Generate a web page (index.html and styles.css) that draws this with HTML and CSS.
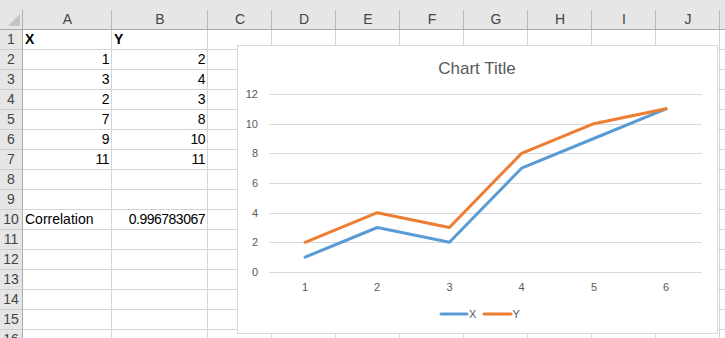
FILE: index.html
```html
<!DOCTYPE html>
<html>

<head>
    <meta content="text/html; charset=utf-8" http-equiv="Content-Type">
    <title>Correlation</title>
    <link rel="stylesheet" href="styles.css">
</head>

<body>
<div class="sheet">
    <div class="row head">
        <div class="corner"><span class="cornerTri"></span></div>
        <div>A</div><div>B</div><div>C</div><div>D</div><div>E</div><div>F</div>
        <div>G</div><div>H</div><div>I</div><div>J</div><div></div>
    </div>
    <div class="row">
        <div class="rh">1</div><div class="bold">X</div><div class="bold">Y</div>
        <div></div><div></div><div></div><div></div><div></div><div></div><div></div><div></div><div></div>
    </div>
    <div class="row">
        <div class="rh">2</div><div class="num">1</div><div class="num">2</div>
        <div></div><div></div><div></div><div></div><div></div><div></div><div></div><div></div><div></div>
    </div>
    <div class="row">
        <div class="rh">3</div><div class="num">3</div><div class="num">4</div>
        <div></div><div></div><div></div><div></div><div></div><div></div><div></div><div></div><div></div>
    </div>
    <div class="row">
        <div class="rh">4</div><div class="num">2</div><div class="num">3</div>
        <div></div><div></div><div></div><div></div><div></div><div></div><div></div><div></div><div></div>
    </div>
    <div class="row">
        <div class="rh">5</div><div class="num">7</div><div class="num">8</div>
        <div></div><div></div><div></div><div></div><div></div><div></div><div></div><div></div><div></div>
    </div>
    <div class="row">
        <div class="rh">6</div><div class="num">9</div><div class="num">10</div>
        <div></div><div></div><div></div><div></div><div></div><div></div><div></div><div></div><div></div>
    </div>
    <div class="row">
        <div class="rh">7</div><div class="num">11</div><div class="num">11</div>
        <div></div><div></div><div></div><div></div><div></div><div></div><div></div><div></div><div></div>
    </div>
    <div class="row">
        <div class="rh">8</div><div></div><div></div>
        <div></div><div></div><div></div><div></div><div></div><div></div><div></div><div></div><div></div>
    </div>
    <div class="row">
        <div class="rh">9</div><div></div><div></div>
        <div></div><div></div><div></div><div></div><div></div><div></div><div></div><div></div><div></div>
    </div>
    <div class="row">
        <div class="rh">10</div><div>Correlation</div><div class="num">0.996783067</div>
        <div></div><div></div><div></div><div></div><div></div><div></div><div></div><div></div><div></div>
    </div>
    <div class="row">
        <div class="rh">11</div><div></div><div></div>
        <div></div><div></div><div></div><div></div><div></div><div></div><div></div><div></div><div></div>
    </div>
    <div class="row">
        <div class="rh">12</div><div></div><div></div>
        <div></div><div></div><div></div><div></div><div></div><div></div><div></div><div></div><div></div>
    </div>
    <div class="row">
        <div class="rh">13</div><div></div><div></div>
        <div></div><div></div><div></div><div></div><div></div><div></div><div></div><div></div><div></div>
    </div>
    <div class="row">
        <div class="rh">14</div><div></div><div></div>
        <div></div><div></div><div></div><div></div><div></div><div></div><div></div><div></div><div></div>
    </div>
    <div class="row">
        <div class="rh">15</div><div></div><div></div>
        <div></div><div></div><div></div><div></div><div></div><div></div><div></div><div></div><div></div>
    </div>
    <div class="row">
        <div class="rh">16</div><div></div><div></div>
        <div></div><div></div><div></div><div></div><div></div><div></div><div></div><div></div><div></div>
    </div>

    <!-- chart floats over the cells -->
    <div class="chart">
        <svg class="plot" width="479" height="287" viewBox="238 46 479 287">
            <text class="chartTitle" x="477" y="74" text-anchor="middle">Chart Title</text>

            <g class="grid">
                <line x1="269" x2="702" y1="94.5" y2="94.5"/>
                <line x1="269" x2="702" y1="124.5" y2="124.5"/>
                <line x1="269" x2="702" y1="153.5" y2="153.5"/>
                <line x1="269" x2="702" y1="183.5" y2="183.5"/>
                <line x1="269" x2="702" y1="213.5" y2="213.5"/>
                <line x1="269" x2="702" y1="242.5" y2="242.5"/>
                <line x1="269" x2="702" y1="272.5" y2="272.5"/>
            </g>

            <g class="axis" text-anchor="end">
                <text x="258" y="98">12</text>
                <text x="258" y="128">10</text>
                <text x="258" y="157">8</text>
                <text x="258" y="187">6</text>
                <text x="258" y="217">4</text>
                <text x="258" y="246">2</text>
                <text x="258" y="276">0</text>
            </g>
            <g class="axis" text-anchor="middle">
                <text x="305" y="291">1</text>
                <text x="377" y="291">2</text>
                <text x="449.5" y="291">3</text>
                <text x="521.5" y="291">4</text>
                <text x="594" y="291">5</text>
                <text x="666" y="291">6</text>
            </g>

            <polyline class="serX" points="305.1,257.2 377.3,227.5 449.4,242.3 521.6,168.2 593.8,138.5 666,108.8"/>
            <polyline class="serY" points="305.1,242.3 377.3,212.7 449.4,227.5 521.6,153.3 593.8,123.7 666,108.8"/>

            <line class="serX" x1="441" x2="467" y1="314" y2="314"/>
            <text class="axis" x="469" y="318">X</text>
            <line class="serY" x1="484" x2="511" y1="314" y2="314"/>
            <text class="axis" x="512.5" y="318">Y</text>
        </svg>
    </div>
</div>
</body>

</html>
```

FILE: styles.css
```css
* {
    box-sizing: border-box;
}

body {
    margin: 0;
    overflow: hidden;
    background: #ffffff;
    font-family: "Liberation Sans", Arial, sans-serif;
    font-size: 14px;
    color: #000000;
}

.sheet {
    position: relative;
    width: 725px;
    height: 338px;
    overflow: hidden;
}

.row {
    display: grid;
    grid-template-columns: 23px 89px 96px repeat(9, 64px);
    height: 20px;
}

.row > div {
    border-right: 1px solid #d4d4d4;
    border-bottom: 1px solid #d4d4d4;
    padding: 0 2px;
    line-height: 19px;
    white-space: nowrap;
    overflow: hidden;
}

.row > .rh {
    background: #e6e6e6;
    border-right-color: #ababab;
    border-bottom-color: #cdcdcd;
    color: #444444;
    text-align: center;
    padding: 0;
}

.head {
    height: 30px;
}

.head > div {
    border-right: none;
    border-bottom: 1px solid #ababab;
    background: linear-gradient(#b9b9b9, #b9b9b9) right bottom / 1px 19px no-repeat, #e6e6e6;
    padding-top: 10px;
    color: #444444;
    text-align: center;
}

.head > .corner {
    display: flex;
    justify-content: flex-end;
    align-items: flex-end;
    padding: 0 3px 3px 0;
    background: linear-gradient(#ababab, #ababab) right bottom / 1px 19px no-repeat, #e6e6e6;
}

.cornerTri {
    display: block;
    width: 12px;
    height: 12px;
    background: #c4c4c4;
    clip-path: polygon(100% 0, 100% 100%, 0 100%);
}

.num {
    text-align: right;
    letter-spacing: -0.5px;
}

.bold {
    font-weight: bold;
}

.chart {
    position: absolute;
    left: 237px;
    top: 45px;
    width: 481px;
    height: 289px;
    background: #ffffff;
    border: 1px solid #d9d9d9;
}

.plot {
    display: block;
}

.chartTitle {
    font-size: 17px;
    fill: #595959;
}

.grid line {
    stroke: #d9d9d9;
    stroke-width: 1;
}

.axis text,
text.axis {
    font-size: 11px;
    fill: #595959;
}

.serX,
.serY {
    fill: none;
    stroke-width: 3;
    stroke-linecap: round;
    stroke-linejoin: round;
}

.serX {
    stroke: #5b9bd5;
}

.serY {
    stroke: #ed7d31;
}
```
